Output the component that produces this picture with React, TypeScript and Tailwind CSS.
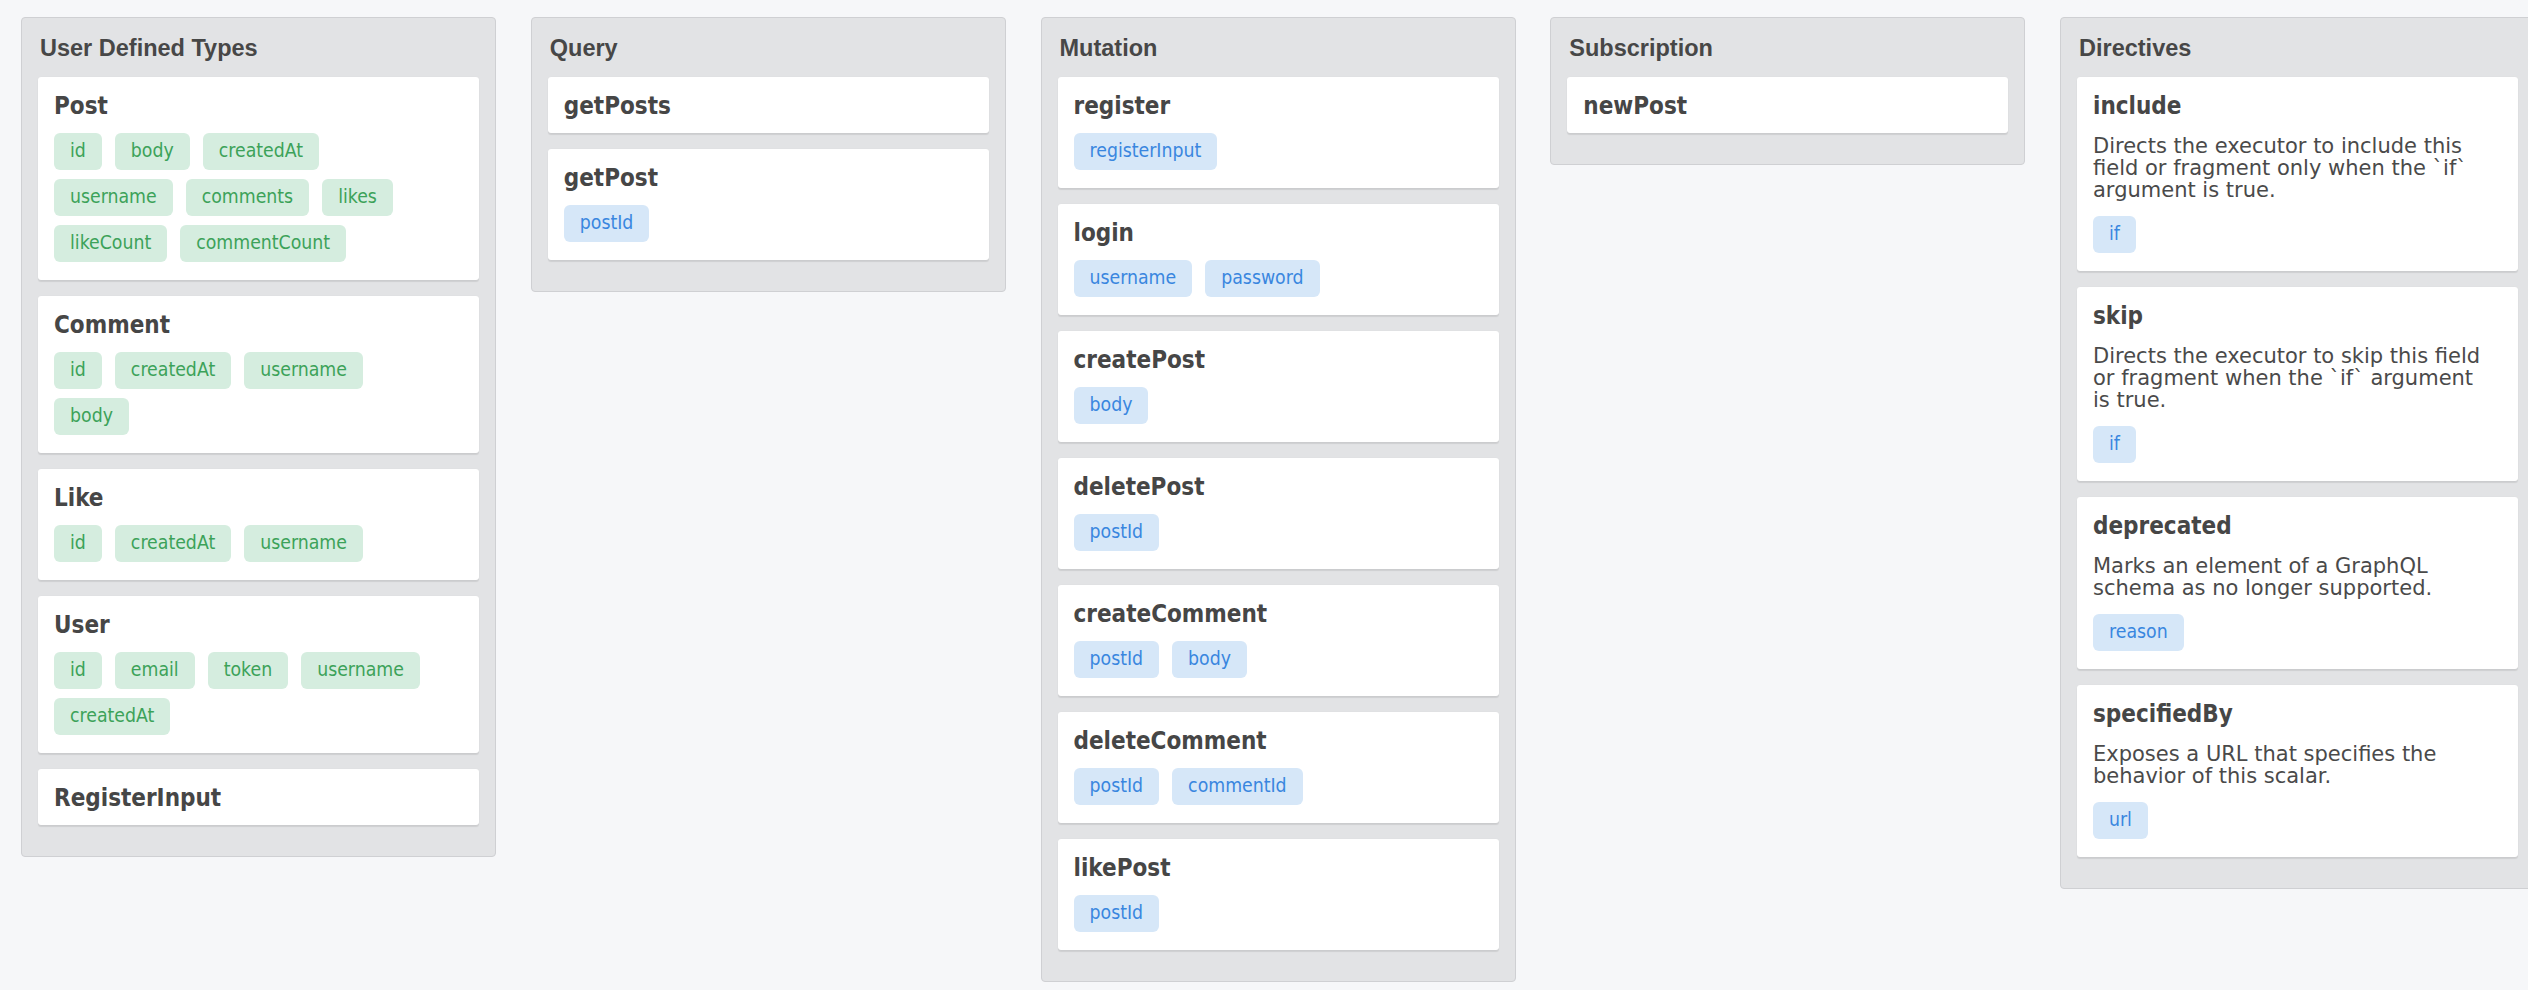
import React from "react";

type Item = { name: string; tags?: string[]; desc?: string[] };

const userTypes: Item[] = [
  { name: "Post", tags: ["id", "body", "createdAt", "username", "comments", "likes", "likeCount", "commentCount"] },
  { name: "Comment", tags: ["id", "createdAt", "username", "body"] },
  { name: "Like", tags: ["id", "createdAt", "username"] },
  { name: "User", tags: ["id", "email", "token", "username", "createdAt"] },
  { name: "RegisterInput" },
];

const queries: Item[] = [{ name: "getPosts" }, { name: "getPost", tags: ["postId"] }];

const mutations: Item[] = [
  { name: "register", tags: ["registerInput"] },
  { name: "login", tags: ["username", "password"] },
  { name: "createPost", tags: ["body"] },
  { name: "deletePost", tags: ["postId"] },
  { name: "createComment", tags: ["postId", "body"] },
  { name: "deleteComment", tags: ["postId", "commentId"] },
  { name: "likePost", tags: ["postId"] },
];

const subscriptions: Item[] = [{ name: "newPost" }];

const directives: Item[] = [
  {
    name: "include",
    desc: ["Directs the executor to include this", "field or fragment only when the `if`", "argument is true."],
    tags: ["if"],
  },
  {
    name: "skip",
    desc: ["Directs the executor to skip this field", "or fragment when the `if` argument", "is true."],
    tags: ["if"],
  },
  {
    name: "deprecated",
    desc: ["Marks an element of a GraphQL", "schema as no longer supported."],
    tags: ["reason"],
  },
  {
    name: "specifiedBy",
    desc: ["Exposes a URL that specifies the", "behavior of this scalar."],
    tags: ["url"],
  },
];

function Pill({ label, green }: { label: string; green: boolean }) {
  return (
    <span
      className={
        green
          ? "rounded-[6px] bg-[#d5eddf] px-[16px] py-[6px] text-[19.3px] leading-[24.5px] text-[#3ca259]"
          : "rounded-[6px] bg-[#d6e7f8] px-[16px] py-[6px] text-[19.3px] leading-[24.5px] text-[#3986df]"
      }
    >
      {label}
    </span>
  );
}

function Card({ item, green }: { item: Item; green: boolean }) {
  return (
    <div className="mb-[16px] rounded-[3px] bg-white p-[16px] shadow-[0_2px_1px_rgba(0,0,0,0.09),0_0_1px_rgba(0,0,0,0.08)]">
      <div className="pt-[2px] text-[24px] font-bold leading-[22px] text-[#464646]">{item.name}</div>
      {item.desc && (
        <div className="mt-[18px] font-['DejaVu_Sans',sans-serif] text-[21px] leading-[22px] text-[#4a4a4a]">
          {item.desc.map((l) => (
            <div key={l} className="whitespace-nowrap">
              {l}
            </div>
          ))}
        </div>
      )}
      {item.tags && (
        <div
          className={
            item.desc
              ? "mt-[15px] mb-[2.5px] flex w-[390px] flex-wrap gap-x-[13px] gap-y-[9.5px]"
              : "mt-[16px] mb-[2.5px] flex w-[390px] flex-wrap gap-x-[13px] gap-y-[9.5px]"
          }
        >
          {item.tags.map((t, i) => (
            <Pill key={t + i} label={t} green={green} />
          ))}
        </div>
      )}
    </div>
  );
}

function Panel({ title, items, green }: { title: string; items: Item[]; green?: boolean }) {
  return (
    <div className="w-[475px] shrink-0 rounded-[4px] border border-[#cfd0d3] bg-[#e2e3e5] px-[16px] pb-[15px] pt-[17px]">
      <div className="mb-[15px] pl-[2px] font-['Liberation_Sans',Arial,sans-serif] text-[23.5px] font-bold leading-[27px] text-[#474747]">
        {title}
      </div>
      {items.map((it) => (
        <Card key={it.name} item={it} green={!!green} />
      ))}
    </div>
  );
}

export default function App() {
  return (
    <div className="h-[990px] w-[2528px] overflow-hidden bg-[#f6f7f9] font-['DejaVu_Sans_Condensed','DejaVu_Sans',sans-serif]">
      <div className="flex items-start gap-[34.75px] pl-[21px] pt-[17px]">
        <Panel title="User Defined Types" items={userTypes} green />
        <Panel title="Query" items={queries} />
        <Panel title="Mutation" items={mutations} />
        <Panel title="Subscription" items={subscriptions} />
        <Panel title="Directives" items={directives} />
      </div>
    </div>
  );
}
